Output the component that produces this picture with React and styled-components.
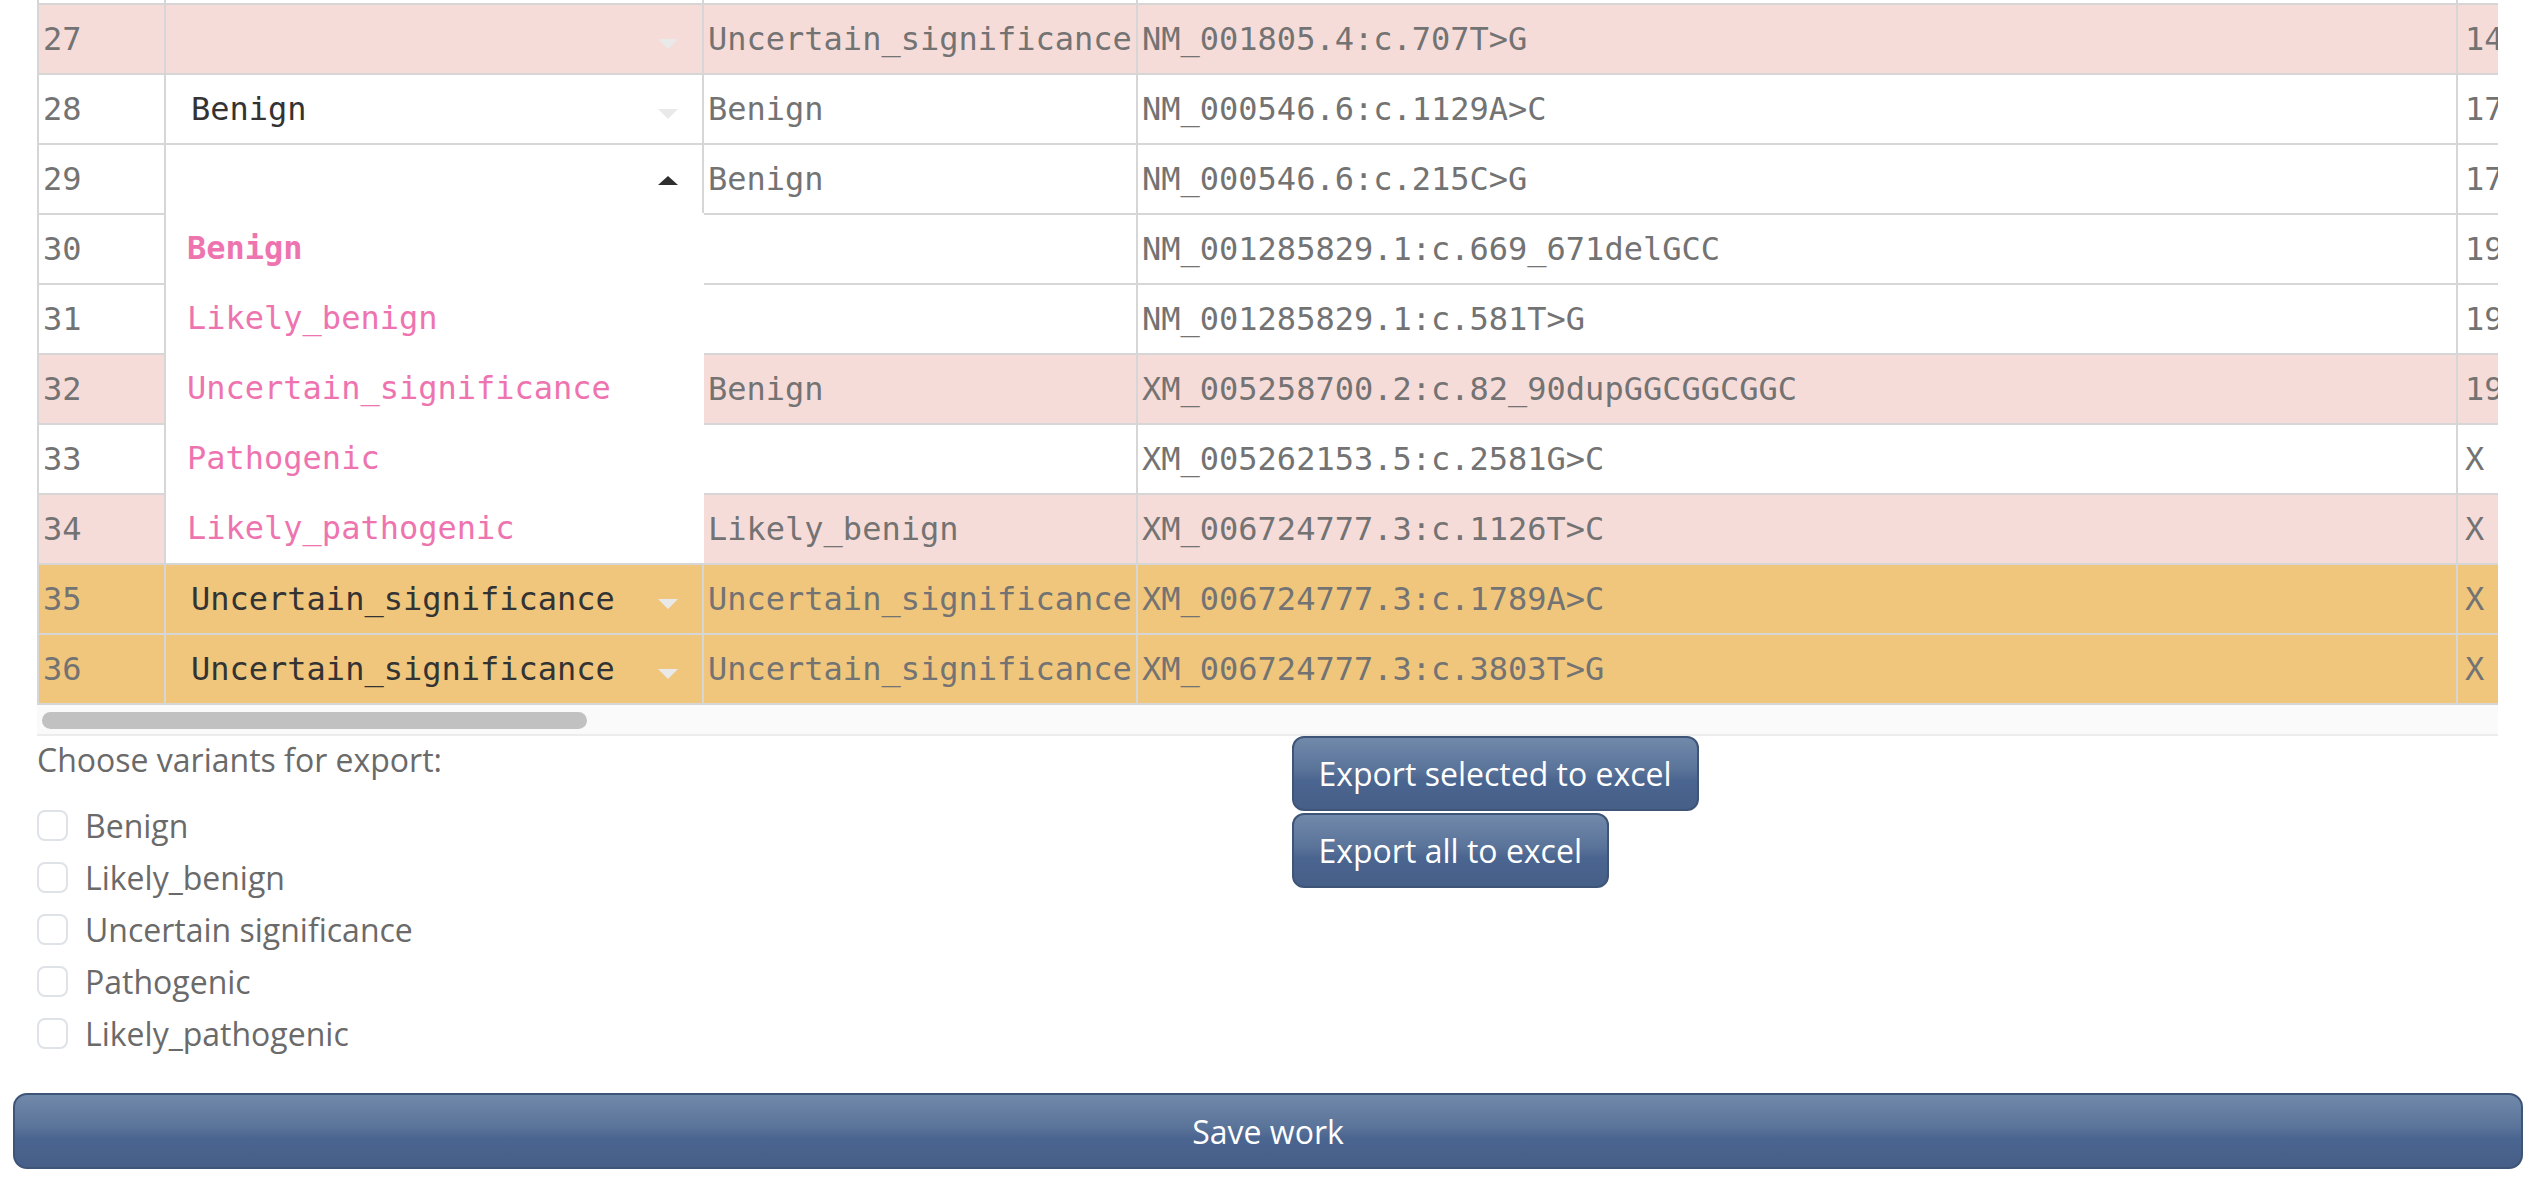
import React from 'react';
import styled, { createGlobalStyle } from 'styled-components';

const GlobalStyle = createGlobalStyle`
  html, body {
    margin: 0;
    padding: 0;
    background: #ffffff;
  }
  body {
    font-family: "Open Sans", "Liberation Sans", sans-serif;
  }
`;

const OPTIONS = ['Benign', 'Likely_benign', 'Uncertain_significance', 'Pathogenic', 'Likely_pathogenic'];

const rows = [
  { n: 27, tone: 'pink', pick: '', prev: 'Uncertain_significance', hgvs: 'NM_001805.4:c.707T>G', chr: '14' },
  { n: 28, tone: 'white', pick: 'Benign', prev: 'Benign', hgvs: 'NM_000546.6:c.1129A>C', chr: '17' },
  { n: 29, tone: 'white', pick: '', prev: 'Benign', hgvs: 'NM_000546.6:c.215C>G', chr: '17', open: true },
  { n: 30, tone: 'white', pick: '', prev: '', hgvs: 'NM_001285829.1:c.669_671delGCC', chr: '19' },
  { n: 31, tone: 'white', pick: '', prev: '', hgvs: 'NM_001285829.1:c.581T>G', chr: '19' },
  { n: 32, tone: 'pink', pick: '', prev: 'Benign', hgvs: 'XM_005258700.2:c.82_90dupGGCGGCGGC', chr: '19' },
  { n: 33, tone: 'white', pick: '', prev: '', hgvs: 'XM_005262153.5:c.2581G>C', chr: 'X' },
  { n: 34, tone: 'pink', pick: '', prev: 'Likely_benign', hgvs: 'XM_006724777.3:c.1126T>C', chr: 'X' },
  { n: 35, tone: 'orange', pick: 'Uncertain_significance', prev: 'Uncertain_significance', hgvs: 'XM_006724777.3:c.1789A>C', chr: 'X' },
  { n: 36, tone: 'orange', pick: 'Uncertain_significance', prev: 'Uncertain_significance', hgvs: 'XM_006724777.3:c.3803T>G', chr: 'X' },
];

const EXPORT_TYPES = ['Benign', 'Likely_benign', 'Uncertain significance', 'Pathogenic', 'Likely_pathogenic'];

const App = () => {
  return (
    <>
      <GlobalStyle />
      <Page>
        <Content>
          <TableViewport>
            <Table>
              <colgroup>
                <col style={{ width: 127 }} />
                <col style={{ width: 538 }} />
                <col style={{ width: 434 }} />
                <col style={{ width: 1320 }} />
                <col style={{ width: 300 }} />
              </colgroup>
              <tbody>
                <ClippedRow>
                  <td /><td /><td /><td /><td />
                </ClippedRow>
                {rows.map((row) => (
                  <Row key={row.n} $tone={row.tone}>
                    <Cell>{row.n}</Cell>
                    <SelectCell>
                      <SelectBox>
                        <span>{row.pick}</span>
                        <Caret $up={row.open} />
                        {row.open && (
                          <Menu>
                            {OPTIONS.map((opt, i) => (
                              <MenuItem key={opt} $active={i === 0}>{opt}</MenuItem>
                            ))}
                          </Menu>
                        )}
                      </SelectBox>
                    </SelectCell>
                    <Cell>{row.prev}</Cell>
                    <Cell>{row.hgvs}</Cell>
                    <Cell $pad={7}>{row.chr}</Cell>
                  </Row>
                ))}
              </tbody>
            </Table>
          </TableViewport>
          <ScrollTrack>
            <ScrollThumb $width={545} />
          </ScrollTrack>

          <ExportSection>
            <div>
              <Heading>Choose variants for export:</Heading>
              <CheckList>
                {EXPORT_TYPES.map((t) => (
                  <CheckRow key={t}>
                    <CheckBox />
                    <span>{t}</span>
                  </CheckRow>
                ))}
              </CheckList>
            </div>
            <ButtonStack>
              <BlueButton>Export selected to excel</BlueButton>
              <BlueButton>Export all to excel</BlueButton>
            </ButtonStack>
          </ExportSection>
        </Content>
        <SaveButton>Save work</SaveButton>
      </Page>
    </>
  );
};

const Page = styled.div`
  padding: 0 13px 14px;
`;

const Content = styled.div`
  padding: 0 25px 0 24px;
`;

const TableViewport = styled.div`
  width: 100%;
  overflow: hidden;
`;

const Table = styled.table`
  border-collapse: collapse;
  table-layout: fixed;
  width: 2719px;
  font-family: "DejaVu Sans Mono", "Liberation Mono", monospace;
  font-size: 32px;
  color: #737373;

  td {
    border: 2px solid #d6d6d6;
  }
`;

const ClippedRow = styled.tr`
  td {
    height: 3px;
    padding: 0;
    border-top: none;
  }
`;

const toneColor = {
  white: '#ffffff',
  pink: '#f6dcd9',
  orange: '#f0c67c',
};

const Row = styled.tr`
  background: ${(p) => toneColor[p.$tone]};
`;

const Cell = styled.td`
  height: 68px;
  padding: 0 ${(p) => p.$pad || 4}px;
  white-space: nowrap;
  overflow: hidden;
  vertical-align: middle;
`;

const SelectCell = styled.td`
  height: 68px;
  padding: 0;
  vertical-align: middle;
`;

const SelectBox = styled.div`
  position: relative;
  height: 68px;
  display: flex;
  align-items: center;
  justify-content: space-between;
  padding: 0 24px 0 25px;
  color: #333333;
  white-space: nowrap;
`;

const Caret = styled.span`
  width: 0;
  height: 0;
  border-left: 10px solid transparent;
  border-right: 10px solid transparent;
  ${(p) =>
    p.$up
      ? 'border-bottom: 9px solid #2f2f2f; margin-top: 3px;'
      : 'border-top: 10px solid #e9e9e9; margin-top: 9px;'}
`;

const Menu = styled.div`
  position: absolute;
  top: 100%;
  left: 0;
  right: -2px;
  z-index: 5;
  background: #ffffff;
  display: flex;
  flex-direction: column;
`;

const MenuItem = styled.div`
  height: 70px;
  display: flex;
  align-items: center;
  padding-left: 21px;
  color: #ee74b0;
  font-weight: ${(p) => (p.$active ? 700 : 400)};
`;

const ScrollTrack = styled.div`
  box-sizing: border-box;
  height: 31px;
  background: #fafafa;
  border-bottom: 2px solid #ececec;
  padding: 7px 5px 0;
`;

const ScrollThumb = styled.div`
  width: ${(p) => p.$width}px;
  height: 17px;
  border-radius: 9px;
  background: #c1c1c1;
`;

const ExportSection = styled.div`
  display: grid;
  grid-template-columns: 1fr 1fr;
`;

const Heading = styled.div`
  margin-top: 4px;
  font-size: 32px;
  line-height: 40px;
  color: #6a6a6a;
`;

const CheckList = styled.div`
  margin-top: 19px;
  display: flex;
  flex-direction: column;
`;

const CheckRow = styled.label`
  height: 52px;
  display: flex;
  align-items: center;
  gap: 17px;
  font-size: 32px;
  color: #6a6a6a;
`;

const CheckBox = styled.span`
  width: 31px;
  height: 31px;
  box-sizing: border-box;
  border: 2px solid #dfe2e6;
  border-radius: 8px;
  background: #ffffff;
`;

const ButtonStack = styled.div`
  padding-left: 24px;
  display: flex;
  flex-direction: column;
  align-items: flex-start;
  gap: 2px;
`;

const BlueButton = styled.button`
  height: 75px;
  padding: 0 25px;
  border: 2px solid #3f5578;
  border-radius: 12px;
  background: linear-gradient(to bottom, #7189aa 0%, #5a7399 45%, #4a6590 60%, #465f88 100%);
  color: #ffffff;
  font-family: "Open Sans", "Liberation Sans", sans-serif;
  font-size: 32px;
  cursor: pointer;
`;

const SaveButton = styled(BlueButton)`
  display: block;
  width: 100%;
  height: 76px;
  margin-top: 34px;
  border-radius: 14px;
`;

export default App;
